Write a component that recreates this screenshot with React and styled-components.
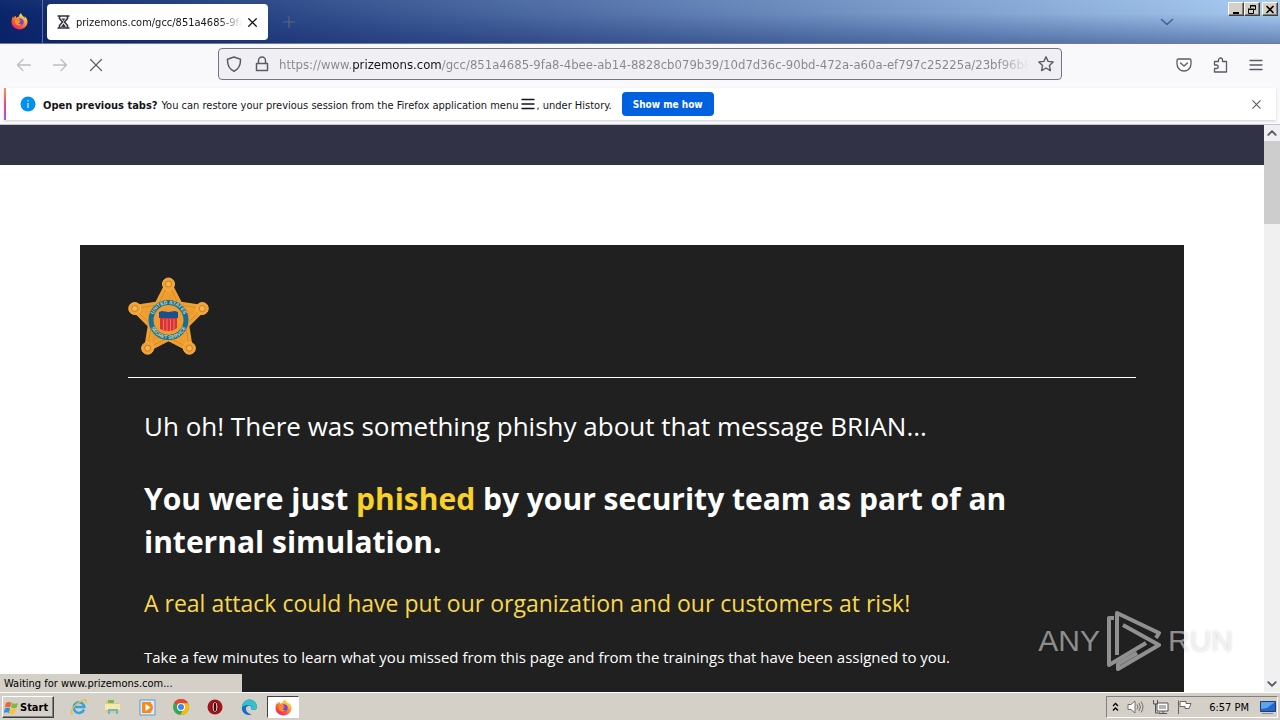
import { useState } from "react";
import styled, { createGlobalStyle, css } from "styled-components";

const GlobalStyle = createGlobalStyle`
  * {
    box-sizing: border-box;
  }

  body {
    margin: 0;
    font-family: "DejaVu Sans Condensed", "DejaVu Sans", sans-serif;
    font-size: 11px;
    color: #15141a;
    overflow: hidden;
  }

  button {
    font-family: inherit;
    padding: 0;
    border: 0;
    background: none;
    color: inherit;
  }

  svg {
    display: block;
    flex: none;
  }
`;

const ui = `"DejaVu Sans Condensed", "DejaVu Sans", sans-serif`;
const segoe = `"Open Sans", "Noto Sans", sans-serif`;

const raised = css`
  border: 1px solid;
  border-color: #fff #404040 #404040 #fff;
  box-shadow: inset -1px -1px 0 #808080;
`;

const Desktop = styled.div`
  height: 100vh;
  display: flex;
  flex-direction: column;
  background: #fff;
`;

/* ---- title bar ---- */

const TitleBar = styled.header`
  height: 44px;
  flex: none;
  display: flex;
  align-items: flex-start;
  background:
    linear-gradient(rgba(255, 255, 255, 0.04), rgba(10, 30, 90, 0) 30%, rgba(10, 30, 100, 0.4)),
    linear-gradient(90deg, #0a246a, #a6caf0);
  border-bottom: 1px solid #6f7c97;
`;

const PinnedTab = styled.button`
  width: 43px;
  height: 43px;
  padding-right: 3px;
  display: grid;
  place-items: center;
  border-right: 1px solid #5a6fa6;
`;

const Tab = styled.div`
  width: 221px;
  height: 36px;
  margin: 4px 0 0 4px;
  padding: 0 8px;
  display: flex;
  align-items: center;
  gap: 5px;
  border-radius: 4px;
  background: #fff;
`;

const TabTitle = styled.span`
  flex: 1;
  overflow: hidden;
  white-space: nowrap;
  margin-right: -4px;
  padding-top: 2px;
  font-size: 11px;
  line-height: 16px;
  mask-image: linear-gradient(90deg, #000 85%, transparent);
`;

const IconButton = styled.button`
  width: 16px;
  height: 16px;
  flex: none;
  display: grid;
  place-items: center;
  color: ${(props) => props.$color || "#5b5b66"};
`;

const NewTab = styled(IconButton)`
  margin: 14px 0 0 13px;
`;

const AllTabs = styled(IconButton)`
  margin: 14px 53px 0 auto;
`;

const WindowButtons = styled.div`
  display: flex;
  margin: 2px 2px 0 0;
`;

const WindowButton = styled.button`
  ${raised}
  width: 16px;
  height: 14px;
  display: grid;
  place-items: center;
  background: #d4d0c8;
  color: #000;

  &:last-child {
    margin-left: 2px;
  }
`;

/* ---- navigation ---- */

const Toolbar = styled.nav`
  height: 44px;
  flex: none;
  display: flex;
  align-items: center;
  padding: 0 16px 2px;
  background: #f9f9fb;
`;

const NavButtons = styled.div`
  width: 202px;
  display: flex;
  gap: 20px;
`;

const UrlBar = styled.form`
  flex: 1;
  max-width: 844px;
  height: 32px;
  margin-top: -2px;
  padding: 0 7px;
  display: flex;
  align-items: center;
  gap: 12px;
  border: 1px solid #75757f;
  border-radius: 4px;
  background: #f0f0f4;
`;

/* the host name is darker than the rest of the address */
const UrlInput = styled.input`
  flex: 1;
  min-width: 0;
  height: 24px;
  margin: 0 -8px 0 -3px;
  padding: 0;
  border: 0;
  outline: 0;
  font-family: ${ui};
  font-size: 13px;
  color: #85858c;
  -webkit-text-fill-color: transparent;
  background: linear-gradient(
    90deg,
    #85858c 73px,
    #15141a 73px,
    #15141a 163px,
    #85858c 163px,
    #85858c calc(100% - 36px),
    #f0f0f4 calc(100% - 4px)
  );
  background-clip: text;
`;

const ToolbarEnd = styled.div`
  margin-left: auto;
  display: flex;
  gap: 20px;
`;

/* ---- notification ---- */

const Notice = styled.section`
  height: 37px;
  flex: none;
  padding-right: 4px;
  background: #f9f9fb;
  border-bottom: 1px solid #c4c4cc;
`;

const NoticeCard = styled.div`
  height: 32px;
  margin-left: 4px;
  padding: 0 12px 0 14px;
  display: flex;
  align-items: center;
  gap: 7px;
  border-left: 2px solid;
  border-image: linear-gradient(#ff9a50, #e8458b, #9059ff) 1;
  background: #fff;
  box-shadow: 0 1px 2px rgba(58, 57, 68, 0.2);
`;

const NoticeText = styled.p`
  margin: 0;
  padding-top: 3px;
  display: flex;
  align-items: center;
  white-space: nowrap;
  font-size: 11px;
  line-height: 16px;

  strong {
    margin-right: 4px;
  }

  svg {
    margin: 0 0 3px 2px;
  }
`;

const PrimaryButton = styled.button`
  height: 24px;
  padding: 0 11px;
  margin-left: 3px;
  border-radius: 4px;
  background: #0061e0;
  color: #fff;
  font-size: 10px;
  font-weight: 700;
`;

const Dismiss = styled(IconButton)`
  margin-left: auto;
`;

/* ---- page ---- */

const Viewport = styled.div`
  position: relative;
  flex: 1;
  min-height: 0;
  display: flex;
`;

const Page = styled.main`
  flex: 1;
  min-width: 0;
  overflow: hidden;
  font-family: ${segoe};
  background: #fff;
`;

const PageBanner = styled.div`
  height: 40px;
  background: #323246;
`;

const Card = styled.article`
  margin: 80px 80px 0;
  padding: 32px 48px 200px;
  background: #202020;
  color: #fff;
`;

const CardHead = styled.div`
  padding-bottom: 20px;
  border-bottom: 1px solid #fff;
`;

const CardBody = styled.div`
  padding: 28px 16px 0;
`;

const Lead = styled.p`
  margin: 0;
  font-size: 26px;
  font-weight: 400;
  line-height: 40px;
`;

const Headline = styled.h1`
  margin: 31px 0 0;
  font-size: 30px;
  font-weight: 700;
  line-height: 43px;

  em {
    font-style: normal;
    color: #f9d129;
  }
`;

const Warning = styled.p`
  margin: 24px 0 0;
  font-size: 23px;
  font-weight: 400;
  line-height: 32px;
  color: #f9d84a;
`;

const Hint = styled.p`
  margin: 26px 0 0;
  font-size: 15px;
  font-weight: 400;
  line-height: 24px;
`;

const ScrollBar = styled.div`
  width: 16px;
  flex: none;
  display: flex;
  flex-direction: column;
  background: #f0f0f0;
`;

const ScrollThumb = styled.div`
  height: 83px;
  margin-bottom: auto;
  background: #cdcdcd;
`;

const StatusText = styled.div`
  position: absolute;
  left: 0;
  bottom: 0;
  width: 242px;
  height: 18px;
  padding: 0 4px;
  background: #d4d0c8;
  color: #000;
  font-size: 11px;
  line-height: 20px;
`;

const Watermark = styled.div`
  position: absolute;
  right: 47px;
  bottom: 19px;
  display: flex;
  align-items: center;
  gap: 6px;
  font-family: "Liberation Sans", sans-serif;
  font-size: 30px;
  line-height: 64px;
  color: rgba(255, 255, 255, 0.5);
  text-shadow: 0 0 3px rgba(0, 0, 0, 0.18);
`;

/* ---- taskbar ---- */

const TaskBar = styled.footer`
  height: 28px;
  flex: none;
  display: flex;
  align-items: center;
  padding: 1px 2px 0;
  border-top: 1px solid #fff;
  background: #d4d0c8;
`;

const StartButton = styled.button`
  ${raised}
  width: 52px;
  height: 22px;
  display: flex;
  align-items: center;
  gap: 1px;
  padding-left: 1px;
  font-size: 11px;
  font-weight: 700;
  color: #000;
`;

const Apps = styled.div`
  display: flex;
  gap: 2px;
  margin-left: 9px;
`;

const AppButton = styled.button`
  width: 32px;
  height: 22px;
  display: grid;
  place-items: center;

  ${(props) =>
    props.$active &&
    css`
      border: 1px solid;
      border-color: #404040 #fff #fff #404040;
      background: #fff;
    `}
`;

const Tray = styled.div`
  height: 22px;
  margin-left: auto;
  padding: 0 1px 0 5px;
  display: flex;
  align-items: center;
  gap: 8px;
  border: 1px solid;
  border-color: #808080 #fff #fff #808080;
  color: #000;
`;

const Clock = styled.time`
  margin: 0 3px 0 8px;
  font-size: 11px;
`;

/* ---- icons ---- */

const Line = ({ size = 16, width = 1.3, children }) => (
  <svg
    width={size}
    height={size}
    viewBox="0 0 16 16"
    fill="none"
    stroke="currentColor"
    strokeWidth={width}
    strokeLinecap="round"
    strokeLinejoin="round"
  >
    {children}
  </svg>
);

const CloseIcon = ({ size = 16, width = 1.2 }) => (
  <Line size={size} width={width}>
    <path d="M2.5 2.5l11 11M13.5 2.5l-11 11" />
  </Line>
);

const MenuIcon = () => (
  <Line>
    <path d="M2 3.5h12M2 8h12M2 12.5h12" />
  </Line>
);

const FirefoxIcon = ({ id }) => (
  <svg width="17" height="17" viewBox="0 0 32 32">
    <defs>
      <linearGradient id={id} x1="0.85" y1="0.05" x2="0.2" y2="1">
        <stop offset="0" stopColor="#fff36b" />
        <stop offset="0.35" stopColor="#ffa62b" />
        <stop offset="0.7" stopColor="#ff4f3c" />
        <stop offset="1" stopColor="#e31587" />
      </linearGradient>
    </defs>
    <path
      fill={`url(#${id})`}
      d="M30 12c-1-3-3-5-5-6 1 2 1 3 1 4C24 6 20 5 19 0c-3 2-4 5-4 7-2 0-4 1-5 2-1-1-1-3-1-4-2 1-3 2-4 4-1 0-1-1-1-3C2 9 1 13 1 17c0 8 7 14 15 14s15-6 15-14c0-2 0-4-1-5z"
    />
    <path fill="#7542e5" d="M16 10c5 0 8 3 8 7s-3 7-8 7-8-3-8-7c0-1 0-2 1-3 2-1 4 0 6 1l3-1c-1-2-3-2-4-3z" />
    <path fill="#ff980e" d="M7 14c2-2 5-1 7 1l4 1c0 2-2 2-4 3 0 2 4 3 7 1-2 4-10 5-13 0-1-2-1-4-1-6z" />
  </svg>
);

const HourglassIcon = () => (
  <svg width="13" height="14" viewBox="0 0 13 14" fill="none" stroke="#33323a" strokeWidth="1.6">
    <path d="M.5 1h12M.5 13h12M2.5 1v2.5L5.5 7l-3 3.5V13M10.5 1v2.5L7.5 7l3 3.5V13" />
    <path d="M4.5 3.5h4L6.5 6zM6.5 8.5L9 12H4z" fill="#33323a" stroke="none" />
  </svg>
);

const points = [-90, -18, 54, 126, 198].map((deg) => {
  const a = (deg * Math.PI) / 180;
  return [40.5 + 35.5 * Math.cos(a), 42.5 + 35.5 * Math.sin(a)];
});

const starPath = points
  .map(([x, y], i) => {
    const a = ((-54 + 72 * i) * Math.PI) / 180;
    return `${x},${y} ${40.5 + 18 * Math.cos(a)},${42.5 + 18 * Math.sin(a)}`;
  })
  .join(" ");

const StarBadge = () => (
  <svg width="82" height="80" viewBox="0 0 82 80" role="img" aria-label="Star badge">
    <defs>
      <linearGradient id="gold" x1="0" y1="0" x2="1" y2="1">
        <stop offset="0" stopColor="#f6ac3c" />
        <stop offset="0.5" stopColor="#e99526" />
        <stop offset="1" stopColor="#f5a735" />
      </linearGradient>
      <path id="ringTop" d="M24.5 43a16 16 0 0 1 32 0" />
      <path id="ringBottom" d="M21.5 43a19 19 0 0 0 38 0" />
    </defs>
    <polygon points={starPath} fill="url(#gold)" stroke="#f0a032" strokeWidth="7" strokeLinejoin="round" />
    <polygon points={starPath} fill="none" stroke="#dc8a20" strokeWidth="1" />
    {points.map(([x, y]) => (
      <g key={x}>
        <circle cx={x} cy={y} r="6" fill="#f2a235" stroke="#f7b24a" />
        <circle cx={x} cy={y} r="3" fill="#f9b750" stroke="#cf7c20" />
      </g>
    ))}
    <circle cx="40.5" cy="43" r="20.5" fill="#e8a23a" />
    <circle cx="40.5" cy="43" r="17.5" fill="#ef9d32" stroke="#176d94" strokeWidth="5" />
    <g fill="#d5d8a8" fontFamily="Liberation Sans" fontSize="5" fontWeight="700">
      <text textAnchor="middle">
        <textPath href="#ringTop" startOffset="50%">UNITED STATES</textPath>
      </text>
      <text textAnchor="middle">
        <textPath href="#ringBottom" startOffset="50%">SECRET SERVICE</textPath>
      </text>
    </g>
    <path d="M31 35l3-1 6.5 1 6.5-1 3 1v6H31z" fill="#16508f" />
    <path d="M32 41h17v10q-3 3-8.5 3T32 52z" fill="#dc3037" />
    <path d="M35.5 42v11M39 42v12M42.5 42v12M46 42v11" stroke="#ec7a6a" />
  </svg>
);

const PlayMark = () => (
  <svg width="56" height="64" viewBox="0 0 56 64">
    <g fill="none" stroke="#fff" strokeWidth="4" strokeLinejoin="round" opacity="0.5">
      <path d="M8 9H3v47L40 34" />
      <path d="M11 46V4L53 24l-3 5" />
      <path d="M17 16L53 36 12 60v-5L31 44" />
    </g>
  </svg>
);

const WindowsIcon = () => (
  <svg width="15" height="15" viewBox="0 0 16 16">
    <path d="M2 3q3-2 6 0L6.5 8q-3-1-5.5 0z" fill="#ef6535" />
    <path d="M8.5 3q3 2 6.5 0l-1.5 5q-3 1.5-6 0z" fill="#7dba42" />
    <path d="M1 9q3-1.5 5.5 0L5 14q-2-2-5.5 0z" fill="#3a8ddb" />
    <path d="M7 9q3 1.5 6 0l-1.5 5q-3 2-6 0z" fill="#fbc431" />
  </svg>
);

const ExplorerIcon = () => (
  <svg width="18" height="18" viewBox="0 0 18 18" fill="none">
    <path d="M14 11.5A5.3 5.3 0 1 1 14.3 9H5" stroke="#32a4e4" strokeWidth="2.5" />
    <path d="M3 15C-1 18 2 9 8 5s10-4 8 0" stroke="#e9bb3c" strokeWidth="1.3" />
  </svg>
);

const FolderIcon = () => (
  <svg width="18" height="18" viewBox="0 0 18 18">
    <path d="M2 3h5l1 2h7v10H2z" fill="#e8c866" />
    <path d="M4 2h6v3H4z" fill="#6fba65" />
    <path d="M1 6h15v6H1z" fill="#f9e9a6" />
    <path d="M4 16v-5h10v5h-2v-3H6v3z" fill="#63b5e5" />
  </svg>
);

const MediaIcon = () => (
  <svg width="17" height="17" viewBox="0 0 17 17">
    <path d="M1 1h15v15H1z" fill="#d9edfa" stroke="#5a9bd0" />
    <path d="M3 3h9v11H3z" fill="#f58b1f" />
    <circle cx="8.5" cy="8.5" r="5.5" fill="#f58b1f" />
    <path d="M6.5 5l5 3.5-5 3.5z" fill="#fff" />
  </svg>
);

const ChromeIcon = () => (
  <svg width="16" height="16" viewBox="0 0 16 16">
    <circle cx="8" cy="8" r="8" fill="#34a853" />
    <path d="M1.1 4A8 8 0 0 1 15 4.2L8 8z" fill="#ea4335" />
    <path d="M15 4.2A8 8 0 0 1 7.5 16L11 9 8 4.2z" fill="#fbbc05" />
    <circle cx="8" cy="8" r="4" fill="#fff" />
    <circle cx="8" cy="8" r="3" fill="#4285f4" />
  </svg>
);

const OperaIcon = () => (
  <svg width="16" height="16" viewBox="0 0 16 16">
    <circle cx="8" cy="8" r="7.5" fill="#a51218" />
    <ellipse cx="8" cy="8" rx="3" ry="5.5" fill="#e8dcd5" stroke="#5f080c" />
    <ellipse cx="8" cy="8" rx="1.3" ry="4.5" fill="#4a0a0c" />
  </svg>
);

const EdgeIcon = () => (
  <svg width="17" height="17" viewBox="0 0 17 17">
    <path d="M1 8a7.5 7.5 0 0 1 15 0c0 3-4 4-6 2 1-2-1-4-3-3-4 1-2 8 4 8-6 3-11-2-10-7z" fill="#176fc5" />
    <path d="M1 8a7.5 7.5 0 0 1 15 0c0 3-4 4-6 2 1-2 0-4-3-4-2 0-5 1-6 2z" fill="#36bfc6" />
  </svg>
);

const SpeakerIcon = () => (
  <svg width="17" height="16" viewBox="0 0 17 16" fill="none" stroke="#707070">
    <path d="M1 5.5h3L8 2v12l-4-3.5H1z" fill="#fff" />
    <path d="M10 5.5q2 2.5 0 5M12 4q3 4 0 8M14 2.5q4 5.5 0 11" />
  </svg>
);

const NetworkIcon = () => (
  <svg width="17" height="16" viewBox="0 0 17 16" fill="none" stroke="#555">
    <path d="M5 4h11v8H5zM7 14.5h8M11 12v2" fill="#fff" />
    <path d="M7 6h7v4H7z" fill="#b5b5b5" stroke="none" />
    <path d="M1.5 1v4h4V1M3.5 5v9H8" />
  </svg>
);

const FlagIcon = () => (
  <svg width="16" height="16" viewBox="0 0 16 16" stroke="#666" fill="#fff">
    <path d="M1.5 15V1.5M3 2.5h6v2h5l-2 5H8v-2H3z" />
  </svg>
);

const DesktopIcon = () => (
  <svg width="16" height="15" viewBox="0 0 16 15">
    <path d="M.5 1.5h15v10H.5z" fill="#2469c7" stroke="#173f80" />
    <path d="M1 2h14l-8 6-6 1z" fill="#5fa4ea" />
    <path d="M2 13h11v1H2z" fill="#888" />
  </svg>
);

const apps = [
  { name: "Internet Explorer", icon: <ExplorerIcon /> },
  { name: "File Explorer", icon: <FolderIcon /> },
  { name: "Media Player", icon: <MediaIcon /> },
  { name: "Chrome", icon: <ChromeIcon /> },
  { name: "Opera", icon: <OperaIcon /> },
  { name: "Edge", icon: <EdgeIcon /> },
  { name: "Firefox", icon: <FirefoxIcon id="foxTask" />, active: true },
];

const App = () => {
  const [url, setUrl] = useState(
    "https://www.prizemons.com/gcc/851a4685-9fa8-4bee-ab14-8828cb079b39/10d7d36c-90bd-472a-a60a-ef797c25225a/23bf96b8-ee"
  );

  return (
    <Desktop>
      <GlobalStyle />
      <TitleBar>
        <PinnedTab aria-label="Firefox View">
          <FirefoxIcon id="foxTab" />
        </PinnedTab>
        <Tab>
          <IconButton as="span">
            <HourglassIcon />
          </IconButton>
          <TabTitle>prizemons.com/gcc/851a4685-9fa8</TabTitle>
          <IconButton aria-label="Close tab" $color="#15141a">
            <CloseIcon size={11} width={1.8} />
          </IconButton>
        </Tab>
        <NewTab aria-label="New tab" $color="#59677b">
          <Line width={1.2}>
            <path d="M8 2.5v11M2.5 8h11" />
          </Line>
        </NewTab>
        <AllTabs aria-label="List all tabs" $color="#40629a">
          <Line width={1.6}>
            <path d="M2.5 5.5L8 10.5l5.5-5" />
          </Line>
        </AllTabs>
        <WindowButtons>
          <WindowButton aria-label="Minimize">
            <svg width="10" height="9" viewBox="0 0 10 9">
              <path d="M2 7h6v2H2z" />
            </svg>
          </WindowButton>
          <WindowButton aria-label="Restore">
            <svg width="10" height="9" viewBox="0 0 10 9" fill="none" stroke="#000">
              <path d="M3.5 3V.5h5v4H7M3 1h6M1.5 4.5h5v4h-5zM1 4h6" />
            </svg>
          </WindowButton>
          <WindowButton aria-label="Close">
            <svg width="10" height="9" viewBox="0 0 10 9" stroke="#000" strokeWidth="1.6">
              <path d="M1.5 1l7 7M8.5 1l-7 7" />
            </svg>
          </WindowButton>
        </WindowButtons>
      </TitleBar>

      <Toolbar>
        <NavButtons>
          <IconButton aria-label="Back" $color="#bcbcc2">
            <Line>
              <path d="M14.5 8h-13M7 2.5L1.5 8 7 13.5" />
            </Line>
          </IconButton>
          <IconButton aria-label="Forward" $color="#bcbcc2">
            <Line>
              <path d="M1.5 8h13M9 2.5L14.5 8 9 13.5" />
            </Line>
          </IconButton>
          <IconButton aria-label="Stop">
            <CloseIcon />
          </IconButton>
        </NavButtons>
        <UrlBar onSubmit={(e) => e.preventDefault()}>
          <IconButton type="button" aria-label="Tracking protection">
            <Line width={1.5}>
              <path d="M8 1L1.5 3.2C1.3 9 3 13 8 15.2c5-2.2 6.7-6.2 6.5-12z" />
            </Line>
          </IconButton>
          <IconButton type="button" aria-label="Connection security">
            <Line width={1.5}>
              <path d="M2.5 7.5h11v7h-11zM4.5 7V4.5a3.5 3.5 0 0 1 7 0V7" />
            </Line>
          </IconButton>
          <UrlInput aria-label="Address" value={url} onChange={(e) => setUrl(e.target.value)} />
          <IconButton type="button" aria-label="Bookmark this page">
            <Line width={1.4}>
              <path d="M8 .8l2.1 4.6 5.1.6-3.8 3.4 1 5.2L8 12l-4.4 2.6 1-5.2L.8 6l5.1-.6z" />
            </Line>
          </IconButton>
        </UrlBar>
        <ToolbarEnd>
          <IconButton aria-label="Save to Pocket">
            <Line>
              <path d="M2.5 2h11q1.5 0 1.5 1.5V7A7 7 0 0 1 1 7V3.5Q1 2 2.5 2zM4.5 6L8 9l3.5-3" />
            </Line>
          </IconButton>
          <IconButton aria-label="Extensions">
            <Line>
              <path d="M2.5 4.5h4V3a2 2 0 0 1 4 0v1.5h4V15h-12v-3.5h2a1.5 1.5 0 0 0 0-3.5h-2z" />
            </Line>
          </IconButton>
          <IconButton aria-label="Application menu">
            <MenuIcon />
          </IconButton>
        </ToolbarEnd>
      </Toolbar>

      <Notice>
        <NoticeCard>
          <svg width="16" height="16" viewBox="0 0 16 16">
            <circle cx="8" cy="8" r="7.5" fill="#0090ed" />
            <path d="M7.5 4h1v1.5h-1zM7.5 7h1v5h-1z" fill="#fff" />
          </svg>
          <NoticeText>
            <strong>Open previous tabs?</strong>
            <span>You can restore your previous session from the Firefox application menu</span>
            <MenuIcon />
            <span>, under History.</span>
          </NoticeText>
          <PrimaryButton>Show me how</PrimaryButton>
          <Dismiss aria-label="Dismiss">
            <CloseIcon size={11} width={1.6} />
          </Dismiss>
        </NoticeCard>
      </Notice>

      <Viewport>
        <Page>
          <PageBanner />
          <Card>
            <CardHead>
              <StarBadge />
            </CardHead>
            <CardBody>
              <Lead>Uh oh! There was something phishy about that message BRIAN...</Lead>
              <Headline>
                You were just <em>phished</em> by your security team as part of an internal simulation.
              </Headline>
              <Warning>A real attack could have put our organization and our customers at risk!</Warning>
              <Hint>
                Take a few minutes to learn what you missed from this page and from the trainings that have been
                assigned to you.
              </Hint>
            </CardBody>
          </Card>
        </Page>
        <ScrollBar>
          <IconButton aria-label="Scroll up">
            <Line size={12} width={2.5}>
              <path d="M3 10.5l5-5 5 5" />
            </Line>
          </IconButton>
          <ScrollThumb />
          <IconButton aria-label="Scroll down">
            <Line size={12} width={2.5}>
              <path d="M3 5.5l5 5 5-5" />
            </Line>
          </IconButton>
        </ScrollBar>
        <StatusText>Waiting for www.prizemons.com...</StatusText>
        <Watermark>
          <span>ANY</span>
          <PlayMark />
          <span>RUN</span>
        </Watermark>
      </Viewport>

      <TaskBar>
        <StartButton>
          <WindowsIcon />
          Start
        </StartButton>
        <Apps>
          {apps.map((app) => (
            <AppButton key={app.name} aria-label={app.name} $active={app.active}>
              {app.icon}
            </AppButton>
          ))}
        </Apps>
        <Tray>
          <svg width="7" height="10" viewBox="0 0 7 10" fill="none" stroke="#000" strokeWidth="1.3">
            <path d="M1 4l2.5-2.5L6 4M1 8.5L3.5 6 6 8.5" />
          </svg>
          <SpeakerIcon />
          <NetworkIcon />
          <FlagIcon />
          <Clock>6:57 PM</Clock>
          <DesktopIcon />
        </Tray>
      </TaskBar>
    </Desktop>
  );
};

export default App;
